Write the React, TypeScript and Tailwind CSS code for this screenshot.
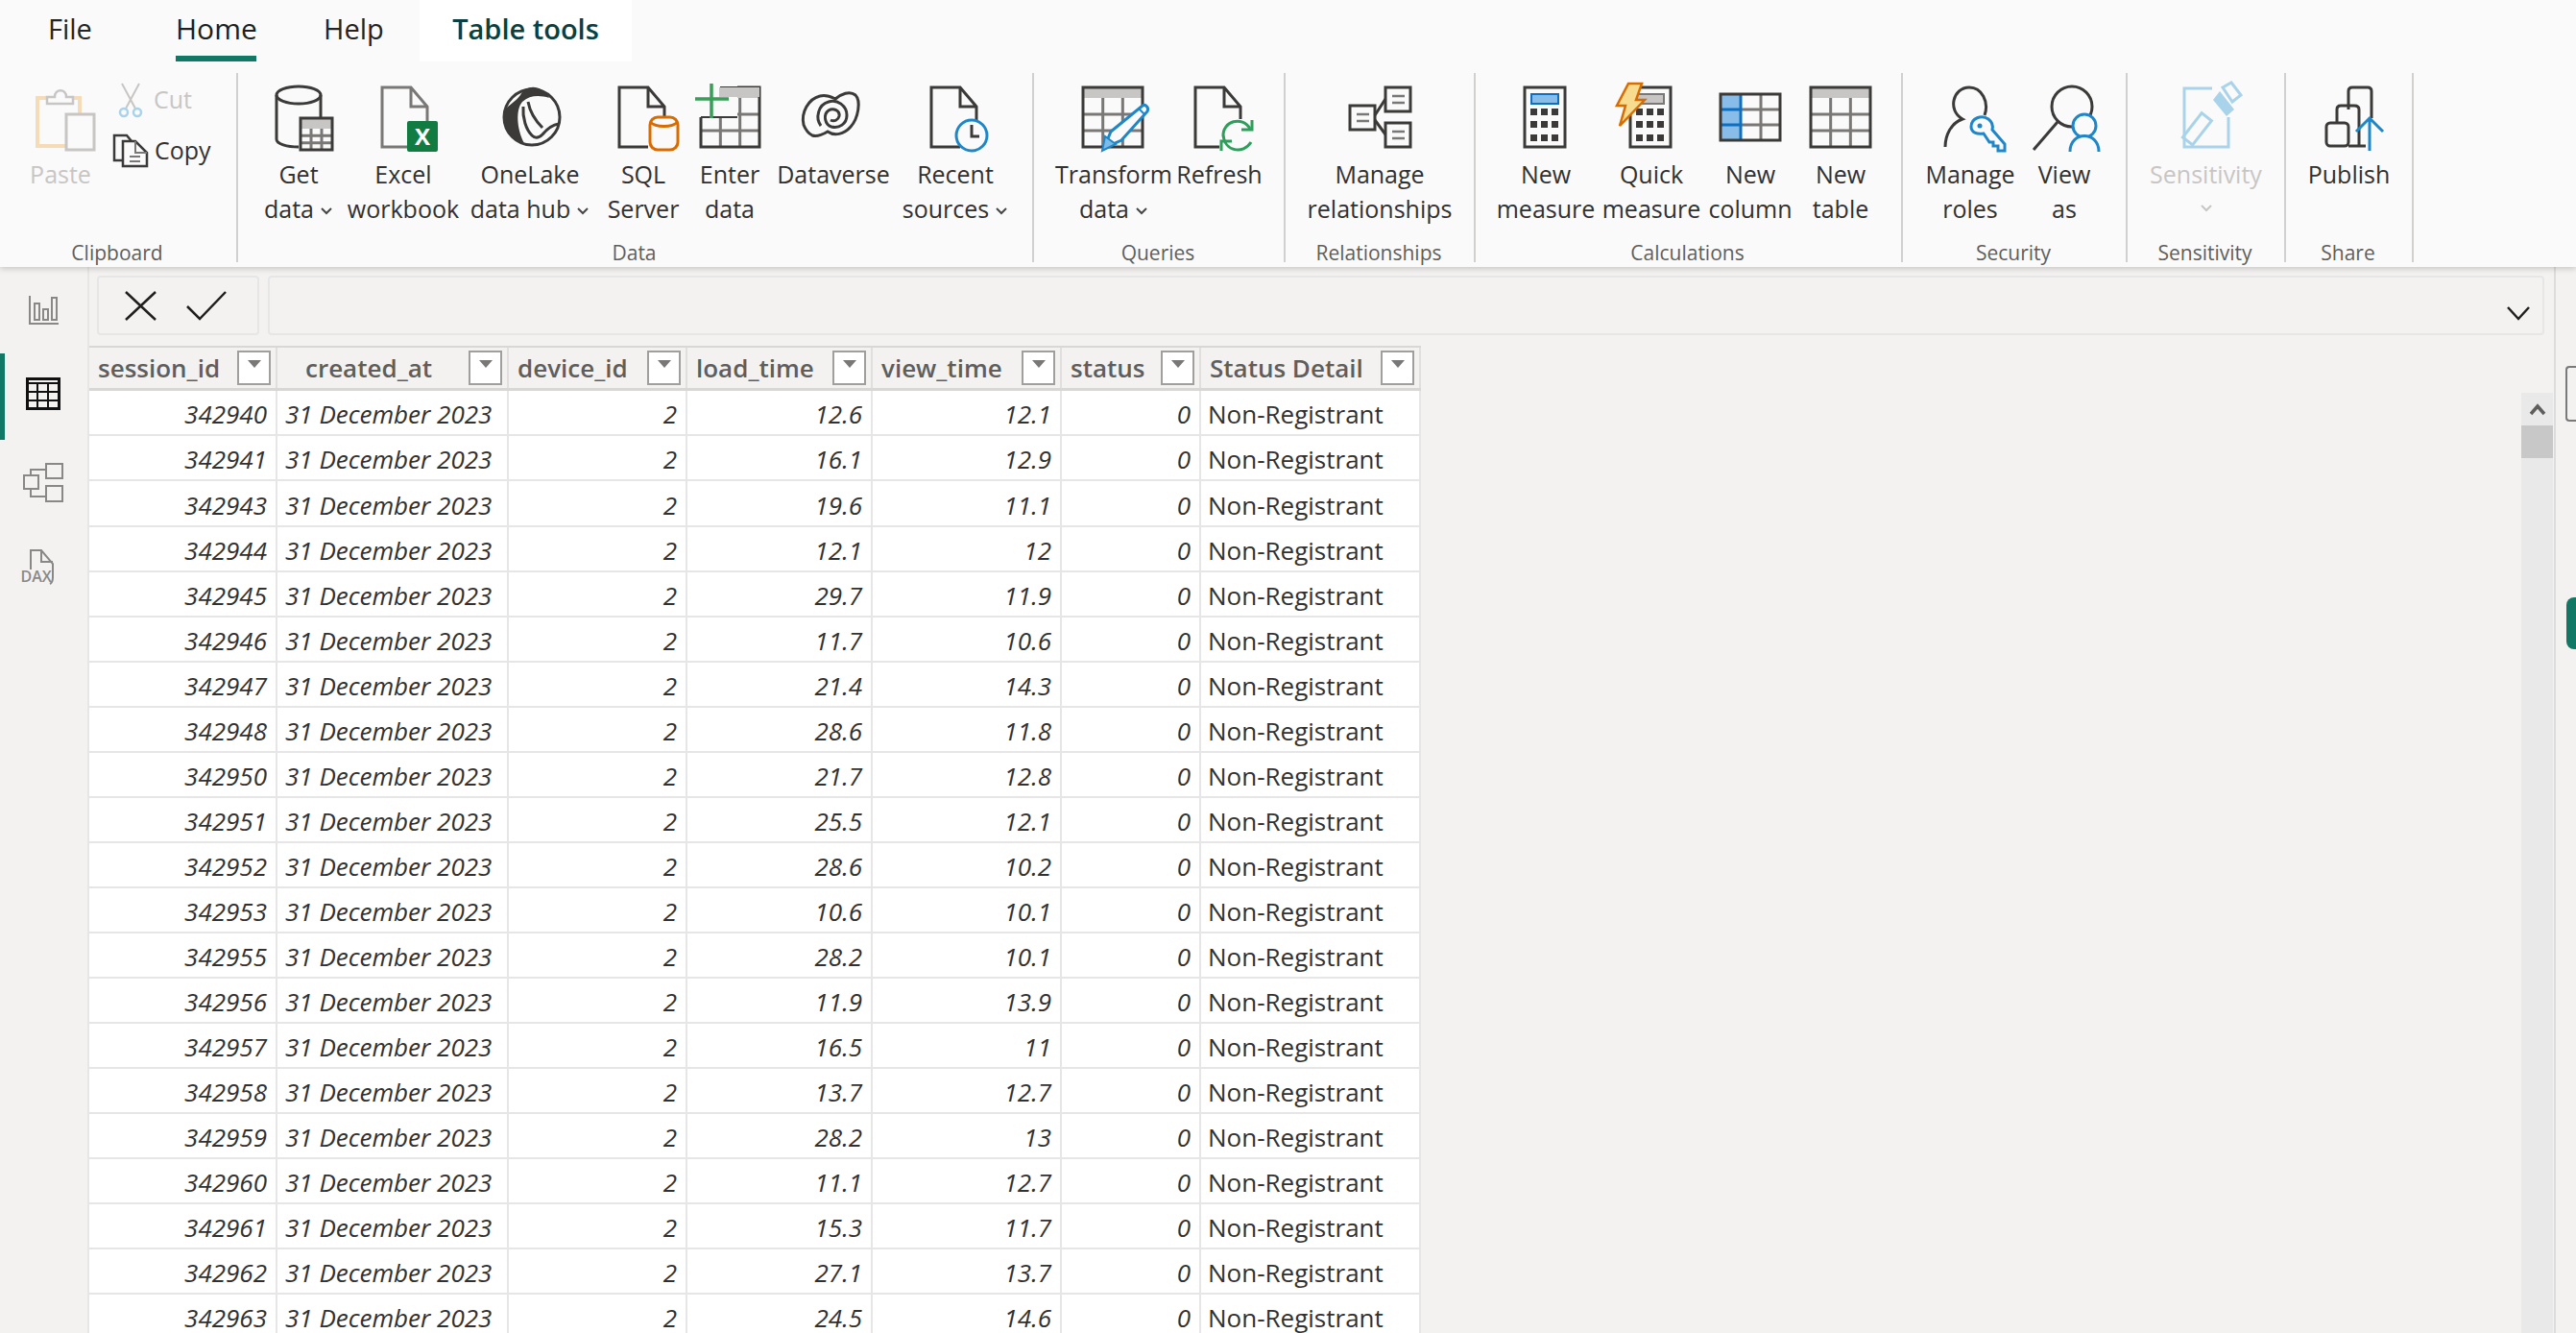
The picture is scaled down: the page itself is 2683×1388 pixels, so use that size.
import type { ReactNode } from "react";

const ink = "#3b3a39";
const mid = "#7a7876";
const pale = "#c8c6c4";
const blue = "#1f87c8";

function Frame({ children }: { children: ReactNode }) {
  return (
    <svg width="80" height="76" viewBox="0 0 80 76" fill="none" className="shrink-0">
      {children}
    </svg>
  );
}

function Chevron({ color = "#484644" }: { color?: string }) {
  return (
    <svg width="14" height="10" viewBox="0 0 14 10" fill="none" className="ml-[6px] inline-block">
      <path d="M2 2l5 5 5-5" stroke={color} strokeWidth="2" />
    </svg>
  );
}

function Doc({ x = 15, stroke = mid }: { x?: number; stroke?: string }) {
  return (
    <path
      d={`M${x + 30} 69H${x}V7h30l17 20v28M${x + 30} 7v20h17`}
      stroke={stroke}
      strokeWidth="3"
    />
  );
}

function TableGlyph({ x, y, w, h, head = true }: { x: number; y: number; w: number; h: number; head?: boolean }) {
  const top = head ? y + 11 : y;
  const rowH = (y + h - top) / 3;
  return (
    <g>
      {head && <rect x={x} y={y} width={w} height={11} fill="#c8c6c4" />}
      <path
        d={`M${x + w / 3} ${top}V${y + h}M${x + (2 * w) / 3} ${top}V${y + h}M${x} ${top + rowH}H${x + w}M${x} ${top + 2 * rowH}H${x + w}`}
        stroke={mid}
        strokeWidth="3"
      />
      <rect x={x} y={y} width={w} height={h} stroke={ink} strokeWidth="3" />
    </g>
  );
}

function PasteIcon() {
  return (
    <Frame>
      <rect x="16" y="18" width="44" height="50" stroke="#f6dcb6" strokeWidth="4" />
      <path d="M26 24v-7h8c0-9 12-9 12 0h7v7z" fill="#fafafa" stroke={pale} strokeWidth="2.5" />
      <rect x="46" y="35" width="29" height="37" fill="#fafafa" stroke={pale} strokeWidth="3" />
    </Frame>
  );
}

function GetDataIcon() {
  return (
    <Frame>
      <path d="M17 15v46c0 5 11 8 23 8M63 15v23" stroke={ink} strokeWidth="3" />
      <ellipse cx="40" cy="15" rx="23" ry="9" stroke={ink} strokeWidth="3" />
      <rect x="42" y="39" width="33" height="33" fill="#fafafa" />
      <TableGlyph x={42} y={39} w={33} h={33} />
    </Frame>
  );
}

function ExcelIcon() {
  return (
    <Frame>
      <Doc x={18} />
      <rect x="44" y="42" width="32" height="32" rx="2" fill="#107c41" />
      <text x="60" y="67" textAnchor="middle" fill="#fff" fontSize="24" fontWeight="700" fontFamily="Open Sans, sans-serif">
        X
      </text>
    </Frame>
  );
}

function OneLakeIcon() {
  return (
    <Frame>
      <circle cx="42" cy="38" r="29" fill="#fafafa" stroke={ink} strokeWidth="3" />
      <path
        d="M30 15C35 4 52 3 60 18 50 15 40 15 32 22 25 30 26 50 34 65 21 61 12 49 12 37 12 27 24 24 30 15z"
        fill={ink}
      />
      <path d="M33 27c-1 12 3 24 9 30 3 3 7 3 11-1 5-6 10-10 17-11" stroke={ink} strokeWidth="3" />
      <path d="M38 22c2 11 8 20 15 27" stroke={ink} strokeWidth="3" />
    </Frame>
  );
}

function SqlIcon() {
  return (
    <Frame>
      <Doc x={15} stroke={ink} />
      <rect x="47" y="38" width="29" height="34" rx="8" fill="#fafafa" stroke="#d86c00" strokeWidth="3" />
      <path d="M47 43c6 6 23 6 29 0" stroke="#d86c00" strokeWidth="3" />
    </Frame>
  );
}

function EnterIcon() {
  return (
    <Frame>
      <TableGlyph x={10} y={7} w={61} h={62} />
      <rect x="4" y="2" width="44" height="36" fill="#fafafa" />
      <path d="M30 7h41M10 38H48" stroke={ink} strokeWidth="2" />
      <rect x="29" y="7" width="42" height="10" fill="#c8c6c4" />
      <path d="M21 3v36M4 19h35" stroke="#3a9d58" strokeWidth="3.5" />
    </Frame>
  );
}

function DataverseIcon() {
  return (
    <Frame>
      <path
        d="M9 46c-3-13 5-27 17-30 7-2 12 1 16 3 6-5 15-9 21-4 6 6 3 24-5 33-7 8-17 10-24 5-5 3-11 6-16 4-4-2-7-6-9-11z"
        stroke={ink}
        strokeWidth="3"
      />
      <path d="M27 47c-6-8-3-22 8-25 9-3 19 4 19 14 0 9-8 14-16 12-7-2-9-13-3-17 5-3 12 0 11 6-1 4-5 6-9 4" stroke={ink} strokeWidth="3" />
    </Frame>
  );
}

function RecentIcon() {
  return (
    <Frame>
      <Doc x={15} stroke={ink} />
      <circle cx="57" cy="57" r="16" fill="#fafafa" stroke={blue} strokeWidth="3" />
      <path d="M57 46v12h8" stroke={ink} strokeWidth="3" />
    </Frame>
  );
}

function TransformIcon() {
  return (
    <Frame>
      <TableGlyph x={8} y={7} w={62} h={62} />
      <path d="M30 70l7-17 33-27c3-2 7 2 5 6L48 62z" fill="#fafafa" stroke={blue} strokeWidth="3" />
      <path d="M28 73l3-15 11 8z" fill="#7dbbe8" stroke={blue} strokeWidth="2" />
      <path d="M66 29l6 6" stroke={blue} strokeWidth="2" />
    </Frame>
  );
}

function RefreshIcon() {
  return (
    <Frame>
      <Doc x={15} stroke={ink} />
      <rect x="40" y="40" width="36" height="34" fill="#fafafa" />
      <path d="M44 58c-1-16 20-22 28-8M44 56c1 18 21 21 29 8" stroke="#2e9e5b" strokeWidth="3" />
      <path d="M74 41v10H63M42 73V63h11" stroke="#2e9e5b" strokeWidth="3" />
    </Frame>
  );
}

function RelationshipIcon() {
  const box = (x: number, y: number) => (
    <g key={`${x}-${y}`}>
      <rect x={x} y={y} width="26" height="25" stroke={ink} strokeWidth="3" />
      <path d={`M${x + 7} ${y + 9}h13M${x + 7} ${y + 16}h13`} stroke={mid} strokeWidth="2.5" />
    </g>
  );
  return (
    <Frame>
      {box(9, 26)}
      {box(46, 7)}
      {box(46, 44)}
      <path d="M35 36l11-17M35 41l11 15" stroke={ink} strokeWidth="3" />
    </Frame>
  );
}

function Keys({ x, top }: { x: number; top: number }) {
  const xs = [x, x + 11, x + 22];
  const ys = [top, top + 13, top + 27];
  return (
    <g fill={ink}>
      {ys.map((y) => xs.map((v) => <rect key={`${v}-${y}`} x={v} y={y} width="7" height="7" />))}
    </g>
  );
}

function MeasureIcon() {
  return (
    <Frame>
      <rect x="18" y="7" width="42" height="62" stroke={ink} strokeWidth="3" />
      <rect x="25" y="14" width="28" height="10" fill="#87bde8" stroke="#0e6fc0" strokeWidth="2" />
      <Keys x={24} top={29} />
    </Frame>
  );
}

function QuickIcon() {
  return (
    <Frame>
      <rect x="18" y="7" width="42" height="62" stroke={ink} strokeWidth="3" />
      <rect x="25" y="14" width="28" height="10" fill="#c8c6c4" stroke={mid} strokeWidth="2" />
      <Keys x={24} top={29} />
      <path d="M16 3h14l-6 17h9L7 47l6-21H4z" fill="#f7dc8f" stroke="#d86c00" strokeWidth="2.5" />
    </Frame>
  );
}

function ColumnIcon() {
  return (
    <Frame>
      <rect x="9" y="14" width="21" height="48" fill="#87bde8" />
      <path d="M30 30h41M30 46h41M51 14v48" stroke={mid} strokeWidth="3" />
      <path d="M9 30h21M9 46h21M30 14v48" stroke="#0e6fc0" strokeWidth="3" />
      <rect x="9" y="14" width="62" height="48" stroke={ink} strokeWidth="3" />
    </Frame>
  );
}

function NewTableIcon() {
  return (
    <Frame>
      <TableGlyph x={9} y={7} w={62} h={62} />
    </Frame>
  );
}

function RolesIcon() {
  return (
    <Frame>
      <path d="M55 36c5-14-3-29-16-29-17 0-23 24-7 33-12 4-18 17-18 29" stroke={ink} strokeWidth="3" />
      <path
        d="M41 48c0-9 11-13 18-8 4 3 5 7 4 11l13 15v7h-7v-5h-5v-4h-4l-6-9c-7 1-13-1-13-7z"
        fill="#fafafa"
        stroke={blue}
        strokeWidth="3"
      />
      <circle cx="50" cy="47" r="2.5" fill={blue} />
    </Frame>
  );
}

function ViewAsIcon() {
  return (
    <Frame>
      <circle cx="48" cy="27" r="21" stroke={ink} strokeWidth="3" />
      <path d="M33 43L8 72" stroke={ink} strokeWidth="3" />
      <circle cx="61" cy="47" r="12" fill="#fafafa" stroke={blue} strokeWidth="3" />
      <path d="M46 74c0-22 30-22 30 0" fill="#fafafa" stroke={blue} strokeWidth="3" />
    </Frame>
  );
}

function SensitivityIcon() {
  return (
    <Frame>
      <path d="M46 8H17v61h46V38" stroke="#a9d3ea" strokeWidth="3" />
      <rect x="24" y="34" width="13" height="32" transform="rotate(38 30 50)" stroke="#a9d3ea" strokeWidth="3" />
      <path d="M47 20l7-9 15 19-8 7z" fill="#a9d3ea" />
      <path d="M57 7l9-5 10 13-9 7z" stroke="#a9d3ea" strokeWidth="3" />
    </Frame>
  );
}

function PublishIcon() {
  return (
    <Frame>
      <path d="M39 30V11c0-3 2-4 4-4h16c2 0 4 1 4 4v28" stroke={ink} strokeWidth="3" />
      <path d="M27 44V30c0-3 2-4 4-4h14c3 0 5 1 5 4v38" stroke={ink} strokeWidth="3" />
      <rect x="16" y="44" width="23" height="24" rx="4" stroke={ink} strokeWidth="3" />
      <path d="M39 68h18" stroke={ink} strokeWidth="3" />
      <path d="M61 73V39M47 53l14-14 14 14" stroke={blue} strokeWidth="3" />
    </Frame>
  );
}

function ScissorsIcon() {
  return (
    <svg width="26" height="38" viewBox="0 0 26 38" fill="none">
      <path d="M4 2l14 26M22 2L8 28" stroke={pale} strokeWidth="2" />
      <circle cx="6" cy="32" r="4" stroke="#a9d3ea" strokeWidth="2.5" />
      <circle cx="20" cy="32" r="4" stroke="#a9d3ea" strokeWidth="2.5" />
    </svg>
  );
}

function CopyIcon() {
  return (
    <svg width="38" height="36" viewBox="0 0 38 36" fill="none">
      <path d="M11 28H2V2h13l5 6" stroke={ink} strokeWidth="2.5" />
      <path d="M11 34V8h13l12 12v14z" fill="#fafafa" stroke={ink} strokeWidth="2.5" />
      <path d="M24 8v12h12M18 24h11M18 29h11" stroke={mid} strokeWidth="2" />
    </svg>
  );
}

function Tool({
  icon,
  lines,
  width,
  drop,
  off,
}: {
  icon: ReactNode;
  lines: string[];
  width: string;
  drop?: boolean;
  off?: boolean;
}) {
  return (
    <div className={`flex flex-col items-center shrink-0 ${width} ${off ? "text-[#c8c6c4]" : "text-[#323130]"}`}>
      {icon}
      <div className="mt-[3px] h-[36px] leading-[36px] whitespace-nowrap">{lines[0]}</div>
      <div className="h-[36px] leading-[36px] whitespace-nowrap">
        {lines[1]}
        {drop && <Chevron />}
      </div>
    </div>
  );
}

function Group({ label, width, children }: { label: string; width: string; children: ReactNode }) {
  return (
    <div className={`flex flex-col shrink-0 h-[197px] border-r-2 border-[#d2d0ce] ${width}`}>
      <div className="flex h-[160px] pt-[8px]">{children}</div>
      <div className="mt-[14px] text-center text-[21px] leading-[28px] text-[#605e5c] whitespace-nowrap pr-[2px]">
        {label}
      </div>
    </div>
  );
}

function Ribbon() {
  return (
    <div className="flex h-[214px] pt-[12px] bg-[#fafafa] text-[25px]">
      <Group label="Clipboard" width="w-[248px]">
        <Tool icon={<PasteIcon />} lines={["Paste", ""]} width="w-[126px]" off />
        <div className="flex flex-col -ml-[3px]">
          <div className="flex items-center h-[38px] mt-[1px] text-[#c8c6c4]">
            <ScissorsIcon />
            <span className="ml-[11px]">Cut</span>
          </div>
          <div className="flex items-center h-[38px] mt-[15px] -ml-[6px] text-[#323130]">
            <CopyIcon />
            <span className="ml-[6px]">Copy</span>
          </div>
        </div>
      </Group>
      <Group label="Data" width="w-[829px]">
        <Tool icon={<GetDataIcon />} lines={["Get", "data"]} width="w-[126px]" drop />
        <Tool icon={<ExcelIcon />} lines={["Excel", "workbook"]} width="w-[92px]" />
        <Tool icon={<OneLakeIcon />} lines={["OneLake", "data hub"]} width="w-[172px]" drop />
        <Tool icon={<SqlIcon />} lines={["SQL", "Server"]} width="w-[64px]" />
        <Tool icon={<EnterIcon />} lines={["Enter", "data"]} width="w-[116px]" />
        <Tool icon={<DataverseIcon />} lines={["Dataverse", ""]} width="w-[100px]" />
        <Tool icon={<RecentIcon />} lines={["Recent", "sources"]} width="w-[154px]" drop />
      </Group>
      <Group label="Queries" width="w-[262px]">
        <Tool icon={<TransformIcon />} lines={["Transform", "data"]} width="w-[166px]" drop />
        <Tool icon={<RefreshIcon />} lines={["Refresh", ""]} width="w-[54px]" />
      </Group>
      <Group label="Relationships" width="w-[198px]">
        <Tool icon={<RelationshipIcon />} lines={["Manage", "relationships"]} width="w-[196px]" />
      </Group>
      <Group label="Calculations" width="w-[445px]">
        <Tool icon={<MeasureIcon />} lines={["New", "measure"]} width="w-[146px]" />
        <Tool icon={<QuickIcon />} lines={["Quick", "measure"]} width="w-[74px]" />
        <Tool icon={<ColumnIcon />} lines={["New", "column"]} width="w-[132px]" />
        <Tool icon={<NewTableIcon />} lines={["New", "table"]} width="w-[56px]" />
      </Group>
      <Group label="Security" width="w-[234px]">
        <Tool icon={<RolesIcon />} lines={["Manage", "roles"]} width="w-[140px]" />
        <Tool icon={<ViewAsIcon />} lines={["View", "as"]} width="w-[56px]" />
      </Group>
      <Group label="Sensitivity" width="w-[165px]">
        <div className="flex flex-col items-center w-[163px] text-[#c8c6c4]">
          <SensitivityIcon />
          <div className="mt-[3px] h-[36px] leading-[36px]">Sensitivity</div>
          <div className="h-[36px] flex items-center justify-center pr-[6px]">
            <Chevron color="#c8c6c4" />
          </div>
        </div>
      </Group>
      <Group label="Share" width="w-[133px]">
        <Tool icon={<PublishIcon />} lines={["Publish", ""]} width="w-[131px]" />
      </Group>
    </div>
  );
}

function Tabs() {
  return (
    <div className="flex h-[64px] bg-[#fafafa] text-[#252423] text-[29px]">
      <div className="w-[183px] pl-[50px] pt-[8px]">File</div>
      <div className="w-[84px] pt-[8px] border-b-[6px] border-[#117865] font-medium text-center whitespace-nowrap text-[#201f1e] text-[30px] leading-[44px]">
        Home
      </div>
      <div className="w-[170px] pl-[70px] pt-[8px]">Help</div>
      <div className="w-[221px] bg-white pt-[8px] text-center font-semibold text-[#094142] whitespace-nowrap">
        Table tools
      </div>
    </div>
  );
}

function Sidebar() {
  return (
    <div className="flex flex-col shrink-0 w-[93px] border-r-2 border-[#e6e6e6]">
      <div className="flex items-center justify-center h-[90px] pr-[2px]">
        <svg width="34" height="34" viewBox="0 0 34 34" fill="none">
          <path d="M3 2v29h30" stroke="#8a8886" strokeWidth="2" />
          <rect x="8" y="10" width="5" height="17" stroke="#8a8886" strokeWidth="2" />
          <rect x="17" y="16" width="5" height="11" stroke="#8a8886" strokeWidth="2" />
          <rect x="26" y="4" width="5" height="23" stroke="#8a8886" strokeWidth="2" />
        </svg>
      </div>
      <div className="flex items-center justify-center h-[90px] border-l-[5px] border-[#117865] pr-[7px] pb-[6px]">
        <svg width="36" height="34" viewBox="0 0 36 34" fill="none">
          <rect x="1.5" y="1.5" width="33" height="31" stroke="#111" strokeWidth="3" />
          <path d="M1 6h34M12 6v27M23 6v27M1 15h34M1 24h34" stroke="#111" strokeWidth="2" />
        </svg>
      </div>
      <div className="flex items-center justify-center h-[87px] pr-[2px]">
        <svg width="42" height="42" viewBox="0 0 42 42" fill="none" stroke="#8a8886" strokeWidth="2">
          <rect x="1" y="14" width="15" height="14" />
          <rect x="24" y="2" width="17" height="15" />
          <rect x="24" y="25" width="17" height="16" />
          <path d="M8 14V8h16M8 28v8h16" />
        </svg>
      </div>
      <div className="flex items-center justify-center h-[90px] pr-[8px]">
        <div className="relative w-[40px] h-[38px]">
          <svg width="40" height="38" viewBox="0 0 40 38" fill="none" stroke="#8a8886" strokeWidth="2">
            <path d="M10 22V2h11l12 14v14c0 3-1 6-3 7M21 2v12h12" />
          </svg>
          <span className="absolute left-0 bottom-[1px] text-[16px] leading-[15px] font-semibold text-[#8a8886]">
            DAX
          </span>
        </div>
      </div>
    </div>
  );
}

function FormulaBar() {
  return (
    <div className="flex shrink-0 h-[82px] pt-[9px] pb-[11px] pl-[8px] pr-[10px] gap-[9px]">
      <div className="flex items-center w-[169px] rounded-[4px] border-2 border-[#e6e6e6] pl-[26px] gap-[29px]">
        <svg width="35" height="33" viewBox="0 0 35 33" fill="none">
          <path d="M2 2l31 29M33 2L2 31" stroke="#201f1e" strokeWidth="2.5" />
        </svg>
        <svg width="44" height="32" viewBox="0 0 44 32" fill="none">
          <path d="M2 17l13 13L42 2" stroke="#201f1e" strokeWidth="2.5" />
        </svg>
      </div>
      <div className="flex flex-1 items-center justify-end rounded-[4px] border-2 border-[#e6e6e6] pr-[13px] pt-[16px]">
        <svg width="24" height="15" viewBox="0 0 24 15" fill="none">
          <path d="M1 1l11 12L23 1" stroke="#201f1e" strokeWidth="2.5" />
        </svg>
      </div>
    </div>
  );
}

const ids = [
  342940, 342941, 342943, 342944, 342945, 342946, 342947, 342948, 342950, 342951, 342952, 342953, 342955, 342956,
  342957, 342958, 342959, 342960, 342961, 342962, 342963,
];
const loads = [
  "12.6", "16.1", "19.6", "12.1", "29.7", "11.7", "21.4", "28.6", "21.7", "25.5", "28.6", "10.6", "28.2", "11.9",
  "16.5", "13.7", "28.2", "11.1", "15.3", "27.1", "24.5",
];
const views = [
  "12.1", "12.9", "11.1", "12", "11.9", "10.6", "14.3", "11.8", "12.8", "12.1", "10.2", "10.1", "10.1", "13.9", "11",
  "12.7", "13", "12.7", "11.7", "13.7", "14.6",
];

const headers = [
  { name: "session_id", cls: "pl-[9px]" },
  { name: "created_at", cls: "pl-[29px]" },
  { name: "device_id", cls: "pl-[9px]" },
  { name: "load_time", cls: "pl-[9px]" },
  { name: "view_time", cls: "pl-[9px]" },
  { name: "status", cls: "pl-[9px]" },
  { name: "Status Detail", cls: "pl-[9px]" },
];

const gridCols = "grid grid-cols-[196px_241px_186px_193px_197px_145px_229px]";

function FilterButton() {
  return (
    <div className="flex items-start justify-center pt-[8px] w-[35px] h-[36px] bg-white border-2 border-[#a19f9d] shrink-0">
      <div className="w-0 h-0 border-l-[7px] border-r-[7px] border-t-[8px] border-l-transparent border-r-transparent border-t-[#7a7876]" />
    </div>
  );
}

function Num({ children }: { children: ReactNode }) {
  return (
    <div className="h-full flex items-center justify-end pr-[9px] pt-[4px] italic border-r-2 border-b-2 border-[#e6e6e6]">
      {children}
    </div>
  );
}

function DataTable() {
  return (
    <div className="w-[1387px] shrink-0 text-[26px] text-[#323130]">
      <div className={`${gridCols} h-[47px] bg-[#f3f2f1] border-t-2 border-b-[3px] border-[#d9d7d5]`}>
        {headers.map((h) => (
          <div
            key={h.name}
            className={`flex items-center justify-between pr-[5px] border-r-2 border-[#e1dfdd] ${h.cls} font-semibold text-[#605e5c] whitespace-nowrap`}
          >
            <span>{h.name}</span>
            <FilterButton />
          </div>
        ))}
      </div>
      {ids.map((id, i) => (
        <div key={id} className={`${gridCols} bg-white ${i === 2 ? "h-[48px]" : "h-[47px]"}`}>
          <Num>{id}</Num>
          <div className="flex items-center pl-[8px] pt-[4px] italic border-r-2 border-b-2 border-[#e6e6e6] whitespace-nowrap">
            31 December 2023
          </div>
          <Num>2</Num>
          <Num>{loads[i]}</Num>
          <Num>{views[i]}</Num>
          <Num>0</Num>
          <div className="flex items-center pl-[7px] pt-[4px] border-r-2 border-b-2 border-[#e6e6e6] whitespace-nowrap">
            Non-Registrant
          </div>
        </div>
      ))}
    </div>
  );
}

function ScrollBar() {
  return (
    <div className="flex flex-col w-[33px] mt-[49px] mr-[1px] bg-[#e9e9e9]">
      <div className="flex items-center justify-center h-[34px]">
        <svg width="18" height="14" viewBox="0 0 18 14" fill="none">
          <path d="M2 12l7-8 7 8" stroke="#605e5c" strokeWidth="3.5" />
        </svg>
      </div>
      <div className="h-[34px] bg-[#c8c8c8]" />
    </div>
  );
}

export default function App() {
  return (
    <div className="flex flex-col w-[2683px] h-[1388px] overflow-hidden bg-[#f3f2f1] font-['Open_Sans',sans-serif]">
      <div className="relative z-10 shrink-0 shadow-[0_2px_6px_rgba(0,0,0,0.18)]">
        <Tabs />
        <Ribbon />
      </div>
      <div className="flex flex-1 min-h-0">
        <Sidebar />
        <div className="flex flex-col w-[2567px] shrink-0">
          <FormulaBar />
          <div className="flex flex-1 justify-between">
            <DataTable />
            <ScrollBar />
          </div>
        </div>
        <div className="flex flex-col flex-1 items-end border-l-2 border-[#dcdcdc]">
          <div className="mt-[103px] h-[58px] w-[11px] rounded-l-[4px] border-2 border-r-0 border-[#7a7a7a]" />
          <div className="mt-[183px] h-[54px] w-[10px] rounded-l-[8px] bg-[#117865]" />
        </div>
      </div>
    </div>
  );
}
